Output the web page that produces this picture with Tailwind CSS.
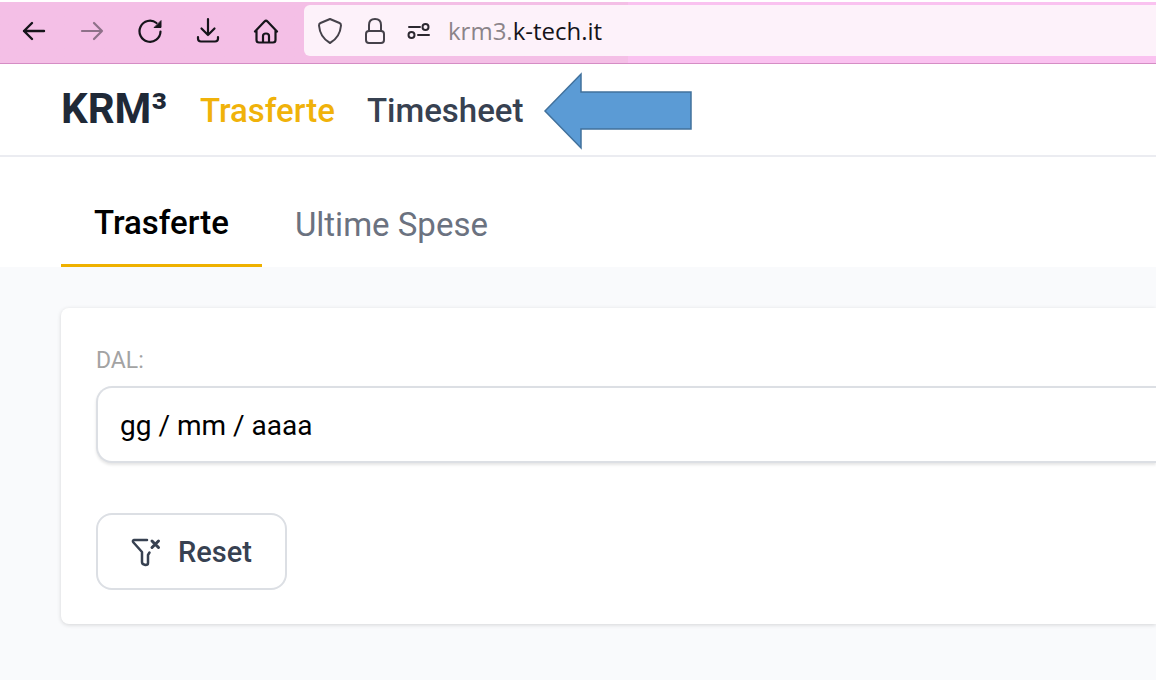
<!DOCTYPE html>
<html lang="it">
<head>
<meta charset="utf-8">
<meta name="viewport" content="width=device-width, initial-scale=1">
<title>KRM³ – Trasferte</title>
<script src="https://cdn.jsdelivr.net/npm/@tailwindcss/browser@4"></script>
</head>
<body class="min-h-screen overflow-x-hidden bg-[#f9fafc] font-['Roboto',sans-serif]">
  <!-- Browser toolbar -->
  <div class="flex h-16 items-center border-t-2 border-b border-t-white border-b-[#d58dc5] bg-linear-to-r from-[#f4bfe6] from-[628px] to-[#fac2f0] to-[628px] pb-1 text-[#15141a]">
    <div class="flex shrink-0 items-center gap-[30px] pr-6 pl-5">
      <button type="button" aria-label="Indietro" class="block size-7"><svg viewBox="0 0 28 28" class="size-7" fill="none" stroke="currentColor" stroke-width="2.4" stroke-linecap="round" stroke-linejoin="round"><path d="M24 14H4M12 6L4 14L12 22"/></svg></button>
      <button type="button" aria-label="Avanti" class="block size-7 opacity-45"><svg viewBox="0 0 28 28" class="size-7" fill="none" stroke="currentColor" stroke-width="2.2" stroke-linecap="round" stroke-linejoin="round"><path d="M4 14H24M16 6L24 14L16 22"/></svg></button>
      <button type="button" aria-label="Ricarica" class="block size-7"><svg viewBox="0 0 28 28" class="size-7" fill="none" stroke="currentColor" stroke-width="2.200" stroke-linecap="round"><path d="M24.500 14.500A10.500 10.500 0 1 1 20.500 6"/><path d="M25 4V10.500H18.500Z" fill="currentColor" stroke-width="1" stroke-linejoin="round"/></svg></button>
      <button type="button" aria-label="Download" class="block size-7"><svg viewBox="0 0 28 28" class="size-7" fill="none" stroke="currentColor" stroke-width="2.200" stroke-linecap="round" stroke-linejoin="round"><path d="M14 2V18M7.500 11.500L14 18L20.500 11.500M4 20V21.500Q4 24.500 7 24.500H21Q24 24.500 24 21.500V20"/></svg></button>
      <button type="button" aria-label="Pagina iniziale" class="block size-7"><svg viewBox="0 0 28 28" class="size-7" fill="none" stroke="currentColor" stroke-width="2.200" stroke-linecap="round" stroke-linejoin="round"><path d="M3 14.500L12.500 4.500Q14 3 15.500 4.500L25 14.500M4.500 13.500V23Q4.500 25.500 7 25.500H21Q23.500 25.500 23.500 23V13.500M11 25.500V19Q11 16.500 14 16.500Q17 16.500 17 19V25.500"/></svg></button>
    </div>
    <div class="flex h-[51px] min-w-0 flex-1 items-center rounded-l-md bg-[#fdf2fa] pl-3">
      <svg viewBox="0 0 28 30" class="h-[30px] w-7 shrink-0" fill="none" stroke="#45424a" stroke-width="2" stroke-linejoin="round"><path d="M14 3L23.500 7Q25 7.700 25 9.500Q24 21.500 14 27Q4 21.500 3 9.500Q3 7.700 4.500 7Z"/></svg>
      <svg viewBox="0 0 28 30" class="ml-[17px] h-[30px] w-7 shrink-0" fill="none" stroke="#45424a" stroke-width="2"><rect x="5" y="15" width="18" height="12" rx="3"/><path d="M8 15V9Q8 3 14 3Q20 3 20 9V15"/></svg>
      <svg viewBox="0 0 28 30" class="ml-4 h-[30px] w-7 shrink-0" fill="none" stroke="#2c2930" stroke-width="2" stroke-linecap="round"><path d="M4 11H15M13 19H24"/><circle cx="20.500" cy="11" r="3"/><circle cx="6.500" cy="19" r="3"/></svg>
      <a href="#" class="ml-[15px] font-['Open_Sans','Noto_Sans',sans-serif] text-[24px] leading-8 text-[#8b8489]">krm3.<span class="text-[#15141a]">k-tech.it</span></a>
    </div>
  </div>

  <!-- Site navigation -->
  <header class="flex h-[93px] items-center border-b-2 border-[#ebecf1] bg-white pl-[61px]">
    <a href="#" class="pb-0.5 text-[42px] leading-[48px] font-bold text-[#1f2937]">KRM³</a>
    <nav class="flex items-center gap-8 pt-0.5 pl-[33px] text-[33px] leading-10 font-medium">
      <a href="#" class="text-[#f0b20a]">Trasferte</a>
      <a href="#" class="text-[#374151]">Timesheet</a>
    </nav>
    <svg viewBox="0 0 150 78" class="mt-0.5 ml-[19px] h-[78px] w-[150px] shrink-0" fill="#5b9bd5" stroke="#41719c" stroke-width="1.500" aria-hidden="true"><path d="M2 39L38 2V20H148V57H38V76Z"/></svg>
  </header>

  <main>
    <div class="flex h-[110px] items-end bg-white pl-[61px]" role="tablist">
      <button type="button" role="tab" aria-selected="true" class="h-[86px] border-b-3 border-[#efb100] px-[33px] text-[33px] leading-10 font-medium text-black">Trasferte</button>
      <button type="button" role="tab" aria-selected="false" class="h-[85px] px-[33px] text-[33px] leading-10 text-[#6b7280]">Ultime Spese</button>
    </div>

    <div class="pt-[41px] pl-[61px]">
      <form class="rounded-l-lg bg-white pt-[37px] pb-[34px] pl-[35px] shadow-[0_1px_4px_#00000026]">
        <label for="dal" class="block text-[23px] leading-8 text-[#a3a3a3]">DAL:</label>
        <input id="dal" type="text" value="gg / mm / aaaa" class="mt-[9px] block h-[77px] w-full rounded-l-2xl border-2 border-r-0 border-[#dcdfe4] bg-white px-[22px] pt-0.5 text-[28px] text-black shadow-[0_2px_3px_#0000001a] outline-none">
        <button type="reset" class="mt-[50px] flex h-[77px] items-center gap-4 rounded-2xl border-2 border-[#dcdfe4] pt-0.5 pr-[33px] pl-8 text-[29px] font-medium text-[#374151]">
          <svg viewBox="0 0 32 32" class="size-8" fill="none" stroke="currentColor" stroke-width="2.500" stroke-linecap="round" stroke-linejoin="round"><path d="M17 3H4Q2 3.500 3.500 5.500L12 15V25Q12 27 14 27.500L15.500 28Q18 28 18 26V18L19.500 15.500"/><path d="M22 4L28.500 10.500M28.500 4L22 10.500" stroke-width="3"/></svg>
          Reset
        </button>
      </form>
    </div>
  </main>
</body>
</html>
